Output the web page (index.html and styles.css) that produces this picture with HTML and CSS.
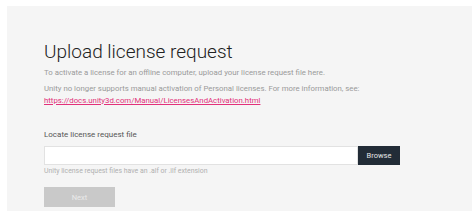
FILE: index.html
```html
<!DOCTYPE html>
<html>
<head>
<meta charset="utf-8">
<link rel="stylesheet" href="styles.css">
</head>
<body>
<div class="panel">
  <h1 class="title">Upload license request</h1>
  <p class="text">To activate a license for an offline computer, upload your license request file here.</p>
  <p class="text second">Unity no longer supports manual activation of Personal licenses. For more information, see:<br><a class="link" href="#">https://docs.unity3d.com/Manual/LicensesAndActivation.html</a></p>
  <div class="field">
    <label class="label">Locate license request file</label>
    <div class="file-row">
      <div class="input"></div>
      <button class="browse">Browse</button>
    </div>
    <div class="hint">Unity license request files have an .alf or .ilf extension</div>
  </div>
  <button class="next">Next</button>
</div>
</body>
</html>
```
FILE: styles.css
```css
html, body { margin: 0; padding: 0; background: #fff; }
body { padding: 6px 2px 3px 7px; font-family: Roboto, "Liberation Sans", sans-serif; }
.panel {
  background: #f5f5f5;
  height: 205px;
  box-sizing: border-box;
  padding: 34px 0 0 37px;
}
.title {
  margin: 0;
  font-weight: 300;
  font-size: 19px;
  line-height: 24px;
  color: #222;
}
.text {
  margin: 3px 0 0;
  font-size: 7.8px;
  line-height: 12px;
  color: #9a9a9a;
}
.second { margin-top: 4px; }
.link { color: #e2317a; text-decoration: underline; }
.field { margin-top: 22px; }
.label { display: block; font-size: 8px; line-height: 11px; color: #555; }
.file-row { display: flex; margin-top: 6px; height: 19px; width: 356px; }
.input { flex: 1; background: #fff; border: 1px solid #e2e2e2; }
.browse {
  width: 42px; border: 0; margin: 0; padding: 0;
  background: #222c37; color: #e6e6e6;
  font-family: inherit; font-size: 7.5px;
}
.hint { margin-top: 2px; font-size: 6.9px; line-height: 9px; color: #b0b0b0; }
.next {
  display: block; margin-top: 11px;
  width: 71px; height: 20px; border: 0; padding: 0;
  background: #c9c9c9; color: #e9e9e9;
  font-family: inherit; font-size: 7.5px;
}
```
